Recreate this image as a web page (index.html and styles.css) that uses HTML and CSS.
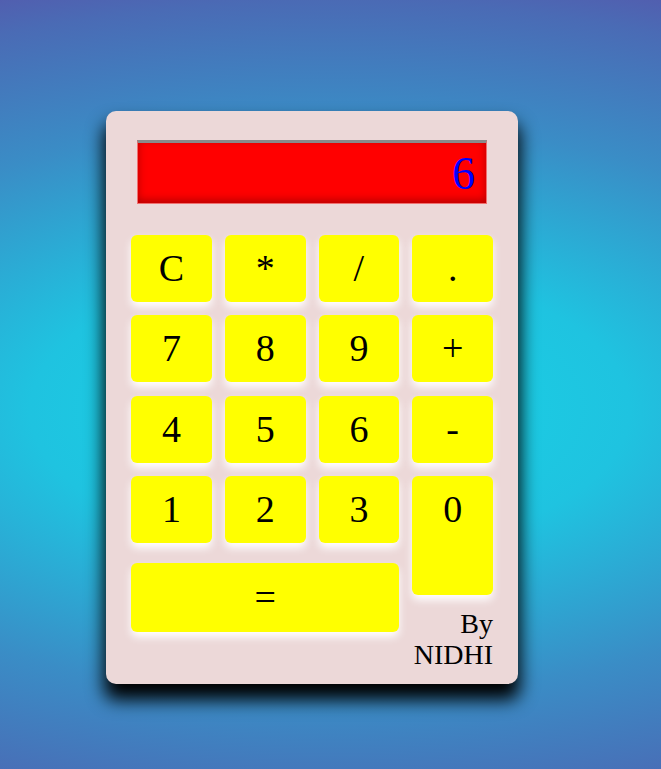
FILE: index.html
```html
<!DOCTYPE html>
<html lang="en">
<head>
<meta charset="utf-8">
<title>Calculator</title>
<link rel="stylesheet" href="styles.css">
</head>
<body>
  <div class="calc">
    <div class="display">6</div>
    <div class="keys">
      <div class="key">C</div>
      <div class="key">*</div>
      <div class="key">/</div>
      <div class="key">.</div>
      <div class="key">7</div>
      <div class="key">8</div>
      <div class="key">9</div>
      <div class="key">+</div>
      <div class="key">4</div>
      <div class="key">5</div>
      <div class="key">6</div>
      <div class="key">-</div>
      <div class="left">
        <div class="key">1</div>
        <div class="key">2</div>
        <div class="key">3</div>
        <div class="key key-eq">=</div>
      </div>
      <div class="right">
        <div class="key key-zero">0</div>
        <div class="credit">By<br>NIDHI</div>
      </div>
    </div>
  </div>
</body>
</html>
```
FILE: styles.css
```css
html, body {
  margin: 0;
  padding: 0;
}
body {
  min-height: 769px;
  box-sizing: border-box;
  padding: 111px 0 0 106px;
  font-family: "Liberation Serif", "Times New Roman", serif;
  background: radial-gradient(ellipse 1000px 480px at 330px 410px,
    #17d5e6 0%, #1fc3e0 30%, #3a8dc6 60%, #4a6bb5 85%, #5a4fa8 100%);
}
.calc {
  width: 412px;
  box-sizing: border-box;
  padding: 29px 25px 14px 25px;
  background: #ecd8d8;
  border-radius: 10px;
  box-shadow: 0 14px 18px 2px #000;
}
.display {
  margin: 0 6px;
  height: 64px;
  box-sizing: border-box;
  display: flex;
  align-items: center;
  justify-content: flex-end;
  padding-right: 11px;
  background: #ff0000;
  border: 1px solid #f07070;
  border-top: 3px solid #8a8a8a;
  box-shadow: inset 0 -3px 8px rgba(90, 0, 0, 0.45);
  color: #0000ff;
  font-size: 46px;
}
.keys {
  margin-top: 31px;
  display: grid;
  grid-template-columns: repeat(4, 1fr);
  grid-template-rows: 67px 67px 67px auto;
  column-gap: 13px;
  row-gap: 13.33px;
}
.key {
  height: 67px;
  line-height: 67px;
  text-align: center;
  background: #ffff00;
  border-radius: 6px;
  box-shadow: 0 5px 9px #ffffff;
  font-size: 38px;
  color: #000;
}
.left {
  grid-column: 1 / 4;
  display: grid;
  grid-template-columns: repeat(3, 1fr);
  align-content: start;
  column-gap: 13px;
  row-gap: 20px;
}
.key-eq {
  grid-column: 1 / -1;
  height: 69px;
  line-height: 69px;
}
.right {
  display: flex;
  flex-direction: column;
}
.key-zero {
  height: 119px;
}
.credit {
  margin-top: 13px;
  text-align: right;
  font-size: 28px;
  line-height: 31px;
  color: #000;
}
```
